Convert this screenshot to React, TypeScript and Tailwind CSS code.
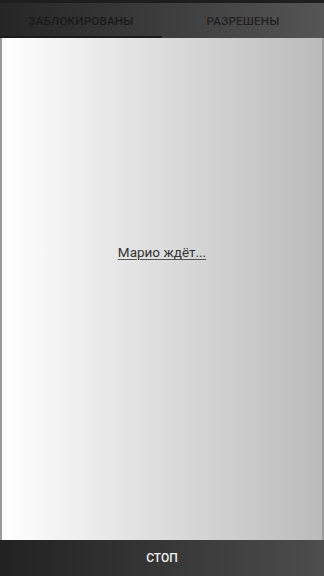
import React from "react";

export default function App() {
  return (
    <div className="w-[324px] h-[576px] flex flex-col overflow-hidden" style={{ fontFamily: "Roboto, 'Liberation Sans', sans-serif" }}>
      <div className="h-[3px] bg-[#1e1e1e]" />
      <div className="h-[35px] flex bg-gradient-to-r from-[#262626] to-[#555555] relative">
        <div className="flex-1 flex items-center justify-center pt-[2px] text-[11.6px] font-medium text-[#1a1a1a] tracking-[0.2px]">ЗАБЛОКИРОВАНЫ</div>
        <div className="flex-1 flex items-center justify-center pt-[2px] text-[11.6px] font-medium text-[#222222] tracking-[0.2px]">РАЗРЕШЕНЫ</div>
        <div className="absolute left-0 bottom-0 w-[162px] h-[2px] bg-[#1c1c1c]" />
      </div>
      <div className="flex-1 flex flex-col items-center pt-[205px] bg-gradient-to-r from-[#ffffff] to-[#bbbbbb] border-x-2 border-[#9a9a9a]">
        <span className="text-[13.5px] leading-[18px] text-[#333333] underline underline-offset-2 decoration-[#555]">Марио ждёт...</span>
      </div>
      <div className="h-[36px] flex items-center justify-center bg-gradient-to-r from-[#222222] to-[#4d4d4d]">
        <span className="text-[12px] font-medium text-[#f0f0f0]">СТОП</span>
      </div>
    </div>
  );
}
